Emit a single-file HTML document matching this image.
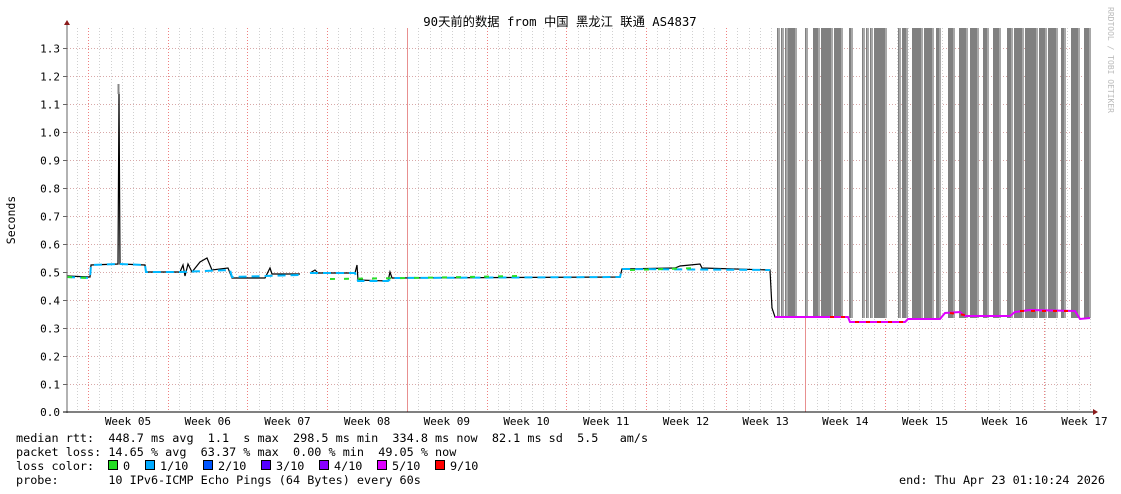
<!DOCTYPE html>
<html><head><meta charset="utf-8"><style>
html,body{margin:0;padding:0;background:#fff;width:1121px;height:494px;overflow:hidden}
svg text{font-family:"DejaVu Sans Mono","Liberation Mono","Noto Sans CJK SC",monospace;fill:#000}
</style></head><body>
<svg width="1121" height="494" viewBox="0 0 1121 494" xmlns="http://www.w3.org/2000/svg">
<rect width="1121" height="494" fill="#fff"/>
<g id="minor" stroke="#d0d0d0" stroke-width="1" stroke-dasharray="1,2"></g>
<g id="grid"></g>
<g id="bars" fill="#808080"></g>
<text x="560" y="26" font-size="12.3" text-anchor="middle">90天前的数据 from 中国 黑龙江 联通 AS4837</text>
<text x="15" y="220" font-size="11.5" text-anchor="middle" transform="rotate(-90 15 220)">Seconds</text>
<text x="1108" y="60" font-size="8" style="fill:#bbb" text-anchor="middle" transform="rotate(90 1108 60)">RRDTOOL / TOBI OETIKER</text>
<g id="ylab" font-size="11"></g>
<g id="xlab" font-size="11"></g>
<g id="data"></g>
<line x1="67" y1="24" x2="67" y2="413" stroke="#666"/>
<line x1="63" y1="412" x2="1094" y2="412" stroke="#000"/>
<polygon points="64,25 70,25 67,20" fill="#8b1a1a"/>
<polygon points="1093,409 1093,415 1098,412" fill="#8b1a1a"/>
<g font-size="11.8">
<text x="16" y="442" xml:space="preserve">median rtt:  448.7 ms avg  1.1  s max  298.5 ms min  334.8 ms now  82.1 ms sd  5.5   am/s</text>
<text x="16" y="456" xml:space="preserve">packet loss: 14.65 % avg  63.37 % max  0.00 % min  49.05 % now</text>
<text x="16" y="470" xml:space="preserve">loss color:</text>
<text x="16" y="484" xml:space="preserve">probe:       10 IPv6-ICMP Echo Pings (64 Bytes) every 60s</text>
<text x="1105" y="484" text-anchor="end">end: Thu Apr 23 01:10:24 2026</text>
</g>
<g id="leg" font-size="11.8"></g>
</svg>
<script>
const NS="http://www.w3.org/2000/svg";
function el(p,t,a,txt){const e=document.createElementNS(NS,t);for(const k in a)e.setAttribute(k,a[k]);if(txt!=null)e.textContent=txt;document.getElementById(p).appendChild(e);return e;}
for(let x=76.5;x<1092;x+=11.39)el("minor","line",{x1:Math.round(x)+.5,y1:28,x2:Math.round(x)+.5,y2:412});
for(let i=1;i<=13;i++){const y=Math.round(412-i*28.03)+.5;el("grid","line",{x1:67,y1:y,x2:1092,y2:y,stroke:"#d8a8a8","stroke-dasharray":"1,2"});
el("ylab","text",{x:60,y:y+4,"text-anchor":"end"},(i/10).toFixed(1));el("grid","line",{x1:63,y1:y,x2:67,y2:y,stroke:"#666"});}
el("ylab","text",{x:60,y:416,"text-anchor":"end"},"0.0");
for(let k=0;k<13;k++){const x=Math.round(88+k*79.7)+.5;const a={x1:x,y1:28,x2:x,y2:412,stroke:"#f08080","stroke-width":1};if(!(k==4||k==9))a["stroke-dasharray"]="1,2";else a.stroke="#e89090";el("grid","line",a);}
for(let k=0;k<13;k++){const x=128+k*79.7;el("xlab","text",{x:x,y:425,"text-anchor":"middle"},"Week "+String(5+k).padStart(2,"0"));}
const b=[[777,779],[781,783],[785,787],[788,796],[805,807],[813,819],[821,832],[834,842],[849,852],[862,864],[866,868],[870,872],[874,886],[898,900],[902,907],[912,922],[924,933],[936,940],[948,954],[959,967],[970,978],[983,988],[993,1000],[1007,1012],[1014,1023],[1025,1037],[1039,1046],[1048,1057],[1061,1065],[1071,1079],[1084,1090]];
b.forEach(([a,c])=>{el("bars","rect",{x:a,y:28,width:c-a+1,height:290});el("bars","rect",{x:c-1,y:28,width:2,height:290,fill:"#a8a8a8"});});
const L1="67,276 90,277 91,265 118,264 119,92 120,264 145,265 146,272 180,272 183,265 185,276 188,264 192,272 200,262 207,258 212,270 228,268 232,278 265,278 270,268 272,274 300,274 M310,273 315,270 318,273 355,273 357,265 358,280 388,281 390,272 392,278 620,277 622,269 675,268 680,266 700,264 702,268 770,270 772,308 775,317 848,317 850,322 905,322 908,319 940,319 945,313 960,312 965,316 1010,316 1015,312 1030,310 1075,311 1080,319 1090,318";
el("data","path",{d:"M"+L1,fill:"none",stroke:"#000","stroke-width":1.2});
el("data","rect",{x:117.5,y:84,width:2,height:10,fill:"#888"});
el("data","path",{d:"M67,277 90,278 91,265 118,264 M120,264 145,265 146,272 180,272 230,270 232,277 300,275 M310,273 355,273 358,281 388,281 392,278 620,277 622,269 770,270",fill:"none",stroke:"#00b8ff","stroke-width":2,"stroke-dasharray":"8,5"});
el("data","path",{d:"M67,277 90,278 M330,279 410,278 520,276 M630,270 700,268",fill:"none",stroke:"#2ae02a","stroke-width":2,"stroke-dasharray":"5,9"});
el("data","path",{d:"M775,317 848,317 850,322 905,322 908,319 940,319 945,313 960,312 965,316 1010,316 1015,312 1030,310 1075,311 1080,319 1090,318",fill:"none",stroke:"#e000ff","stroke-width":2});
el("data","path",{d:"M830,317 848,317 M855,322 905,322 M950,313 965,315 M1020,311 1075,311",fill:"none",stroke:"#ff0000","stroke-width":2,"stroke-dasharray":"4,7"});
const cols=[["#22dd22","0"],["#00aaff","1/10"],["#0055ff","2/10"],["#5500ff","3/10"],["#8800ff","4/10"],["#dd00ff","5/10"],["#ff0000","9/10"]];
const xs=[108,145,203,261,319,377,435];
cols.forEach(([c,t],i)=>{el("leg","rect",{x:xs[i]+.5,y:460.5,width:9,height:9,fill:c,stroke:"#000"});el("leg","text",{x:xs[i]+15,y:470},t);});
</script>
</body></html>
